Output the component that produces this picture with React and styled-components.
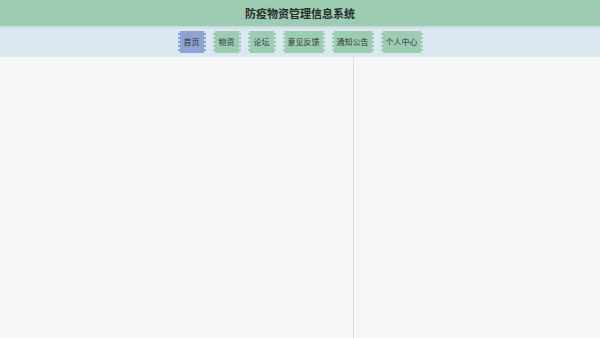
import styled, { createGlobalStyle } from "styled-components";

const Global = createGlobalStyle`
  body {
    margin: 0;
    font-family: "Noto Sans CJK SC", "Noto Sans", sans-serif;
    background: #f7f7f7;
  }
`;

const Page = styled.div`
  height: 338px;
  display: flex;
  flex-direction: column;
  overflow: hidden;
`;

const Header = styled.header`
  height: 26px;
  background: #9ccdb3;
  display: flex;
  align-items: center;
  justify-content: center;
  box-shadow: 0 1px 3px rgba(0, 0, 0, 0.12);
  position: relative;
  z-index: 1;
`;

const Title = styled.h1`
  margin: 0;
  font-size: 11px;
  font-weight: bold;
  color: #2a2a2a;
`;

const Nav = styled.nav`
  height: 31px;
  background: #dae8f0;
  display: flex;
  align-items: center;
  justify-content: center;
  gap: 7px;
`;

const NavItem = styled.div`
  height: 22px;
  padding: 0 3px;
  box-sizing: border-box;
  display: flex;
  align-items: center;
  justify-content: center;
  font-size: 8px;
  color: #333;
  background: ${(p) => (p.$active ? "#8fa3d3" : "#9ccdb3")};
  border-left: 2px dotted #d6e4ec;
  border-right: 2px dotted #d6e4ec;
  min-width: 28px;
`;

const Body = styled.main`
  flex: 1;
  display: flex;
  background: #f7f7f7;
`;

const Left = styled.section`
  width: 353px;
  border-right: 1px solid #dcdcdc;
`;

const Right = styled.section`
  flex: 1;
`;

const items = ["首页", "物资", "论坛", "意见反馈", "通知公告", "个人中心"];

export default function App() {
  return (
    <Page>
      <Global />
      <Header>
        <Title>防疫物资管理信息系统</Title>
      </Header>
      <Nav>
        {items.map((t, i) => (
          <NavItem key={t} $active={i === 0}>
            {t}
          </NavItem>
        ))}
      </Nav>
      <Body>
        <Left />
        <Right />
      </Body>
    </Page>
  );
}
